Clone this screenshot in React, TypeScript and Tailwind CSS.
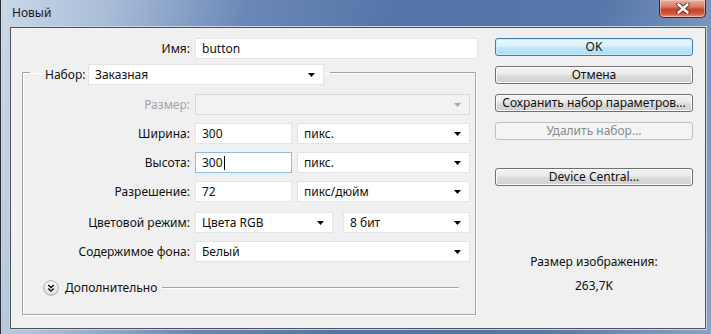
import React from "react";

function Arrow({ disabled }: { disabled?: boolean }) {
  return (
    <svg width="7" height="4" viewBox="0 0 7 4" className="shrink-0">
      <polygon points="0,0 7,0 3.5,4" fill={disabled ? "#a8a8a8" : "#000"} />
    </svg>
  );
}

function Select({ text, w, disabled }: { text: string; w: string; disabled?: boolean }) {
  return (
    <div
      className={`${w} h-[21px] flex items-center justify-between pl-[6px] pr-[8px] border ${
        disabled ? "bg-[#f2f2f2] border-[#d9d9d9]" : "bg-white border-[#e4e4e4]"
      }`}
    >
      <span className="text-[12px] leading-none text-[#111]">{text}</span>
      <Arrow disabled={disabled} />
    </div>
  );
}

function Input({ text, w, focused }: { text: string; w: string; focused?: boolean }) {
  return (
    <div
      className={`${w} h-[21px] flex items-center pl-[6px] bg-white border ${
        focused ? "border-[#8cbbe3]" : "border-[#e4e4e4]"
      }`}
    >
      <span className="text-[12px] leading-none text-[#111]">{text}</span>
      {focused && <span className="w-px h-[14px] bg-black ml-px" />}
    </div>
  );
}

function Row({ label, children, disabled, extra }: { label: string; children: React.ReactNode; disabled?: boolean; extra?: string }) {
  return (
    <div className={`flex items-center h-[21px] ${extra ?? ""}`}>
      <div className={`w-[167px] text-right text-[12px] leading-none ${disabled ? "text-[#a3a3a3]" : "text-[#111]"}`}>
        {label}
      </div>
      <div className="ml-[5px] flex items-center">{children}</div>
    </div>
  );
}

function Btn({ label, kind }: { label: string; kind?: "ok" | "disabled" }) {
  const cls =
    kind === "ok"
      ? "border-[#3c7fb1] bg-[linear-gradient(#ecf8fd,#dcf2fc_45%,#c2e8fb_50%,#a9dcf6)] text-[#111] shadow-[inset_0_0_0_1px_#c9ecfb]"
      : kind === "disabled"
      ? "border-[#bcc0c3] bg-[#f4f4f4] text-[#8a8a8a]"
      : "border-[#707070] bg-[linear-gradient(#f3f3f3,#ebebeb_45%,#dddddd_50%,#cfcfcf)] text-[#111] shadow-[inset_0_0_0_1px_#fbfbfb]";
  return (
    <div className={`h-[18px] w-full rounded-[3px] border flex items-center justify-center text-[12px] leading-none ${cls}`}>
      {label}
    </div>
  );
}

function ExpandIcon() {
  return (
    <svg width="16" height="16" viewBox="0 0 16 16" className="shrink-0">
      <defs>
        <linearGradient id="eg" x1="0" y1="0" x2="0" y2="1">
          <stop offset="0" stopColor="#ffffff" />
          <stop offset="1" stopColor="#dcdcdc" />
        </linearGradient>
      </defs>
      <circle cx="8" cy="8" r="7.3" fill="url(#eg)" stroke="#a9a9a9" strokeWidth="1" />
      <path d="M5.2 5 L8 7.6 L10.8 5" fill="none" stroke="#111" strokeWidth="1.4" />
      <path d="M5.2 8.4 L8 11 L10.8 8.4" fill="none" stroke="#111" strokeWidth="1.4" />
    </svg>
  );
}

function CloseBtn() {
  return (
    <div className="w-[47px] h-[18px] rounded-b-[5px] border border-t-0 border-[#5a2019] bg-[linear-gradient(#eab1a1,#d77b63_40%,#c7402a_55%,#d0563d_80%,#e79a7c)] flex items-center justify-center shadow-[inset_0_0_0_1px_rgba(255,220,200,0.5)]">
      <svg width="14" height="11" viewBox="0 0 14 11">
        <path d="M2.5 1.5 L11.5 9.5 M11.5 1.5 L2.5 9.5" stroke="#4a2018" strokeWidth="4.2" strokeLinecap="round" />
        <path d="M2.5 1.5 L11.5 9.5 M11.5 1.5 L2.5 9.5" stroke="#ffffff" strokeWidth="2.6" strokeLinecap="round" />
      </svg>
    </div>
  );
}

export default function App() {
  return (
    <div className="w-[711px] h-[334px] overflow-hidden flex flex-col border-l border-[#2e3238] bg-[linear-gradient(100deg,#cbd8e8_0%,#a9bdd8_14%,#6a88b7_32%,#5475a9_52%,#5677aa_78%,#8aa2c6_100%)] font-['Noto_Sans','Liberation_Sans',sans-serif] pr-[5px] pb-[5px] pl-[9px]">
      {/* title bar */}
      <div className="h-[27px] shrink-0 flex items-start justify-between">
        <div className="pt-[6px] pl-[2px] text-[12px] leading-[14px] text-[#1a1a1a]">Новый</div>
        <CloseBtn />
      </div>
      {/* panel */}
      <div className="flex-1 flex bg-[#f0f0f0] border border-[#4f545b] shadow-[0_0_0_1px_#c8d5e7] pt-[10px]">
        {/* left column */}
        <div className="w-[467px] flex flex-col">
          <div className="flex items-center h-[21px]">
            <div className="w-[179px] text-right text-[12px] leading-none text-[#111]">Имя:</div>
            <div className="ml-[5px]">
              <Input text="button" w="w-[283px]" />
            </div>
          </div>
          <fieldset className="ml-[11px] w-[454px] h-[256px] border border-[#a5a5a5] shadow-[1px_1px_0_#ffffff,inset_1px_1px_0_#ffffff] pt-[9px]">
            <legend className="ml-[7px] pl-[15px] pr-[6px] pt-[5px]">
              <div className="flex items-center">
                <span className="w-[43px] text-[12px] leading-none text-[#111]">Набор:</span>
                <Select text="Заказная" w="w-[236px]" />
              </div>
            </legend>
            <div className="flex flex-col gap-[8px]">
              <Row label="Размер:" disabled>
                <Select text="" w="w-[275px]" disabled />
              </Row>
              <Row label="Ширина:">
                <Input text="300" w="w-[97px]" />
                <div className="ml-[5px]">
                  <Select text="пикс." w="w-[173px]" />
                </div>
              </Row>
              <Row label="Высота:">
                <Input text="300" w="w-[97px]" focused />
                <div className="ml-[5px]">
                  <Select text="пикс." w="w-[173px]" />
                </div>
              </Row>
              <Row label="Разрешение:">
                <Input text="72" w="w-[97px]" />
                <div className="ml-[5px]">
                  <Select text="пикс/дюйм" w="w-[173px]" />
                </div>
              </Row>
              <Row label="Цветовой режим:" extra="mt-[2px]">
                <Select text="Цвета RGB" w="w-[138px]" />
                <div className="ml-[10px]">
                  <Select text="8 бит" w="w-[127px]" />
                </div>
              </Row>
              <Row label="Содержимое фона:">
                <Select text="Белый" w="w-[275px]" />
              </Row>
            </div>
            <div className="flex items-center mt-[18px] pl-[20px] pr-[16px]">
              <ExpandIcon />
              <span className="ml-[6px] text-[12px] leading-none text-[#111]">Дополнительно</span>
              <div className="ml-[5px] flex-1 h-[2px] border-t border-[#a5a5a5] border-b border-b-white" />
            </div>
          </fieldset>
        </div>
        {/* right column */}
        <div className="ml-[17px] w-[198px] flex flex-col">
          <Btn label="OK" kind="ok" />
          <div className="mt-[10px]">
            <Btn label="Отмена" />
          </div>
          <div className="mt-[10px]">
            <Btn label="Сохранить набор параметров..." />
          </div>
          <div className="mt-[10px]">
            <Btn label="Удалить набор..." kind="disabled" />
          </div>
          <div className="mt-[28px]">
            <Btn label="Device Central..." />
          </div>
          <div className="mt-[68px] text-center text-[12px] leading-[16px] text-[#111]">Размер изображения:</div>
          <div className="mt-[8px] text-center text-[12px] leading-[16px] text-[#111]">263,7K</div>
        </div>
      </div>
    </div>
  );
}
